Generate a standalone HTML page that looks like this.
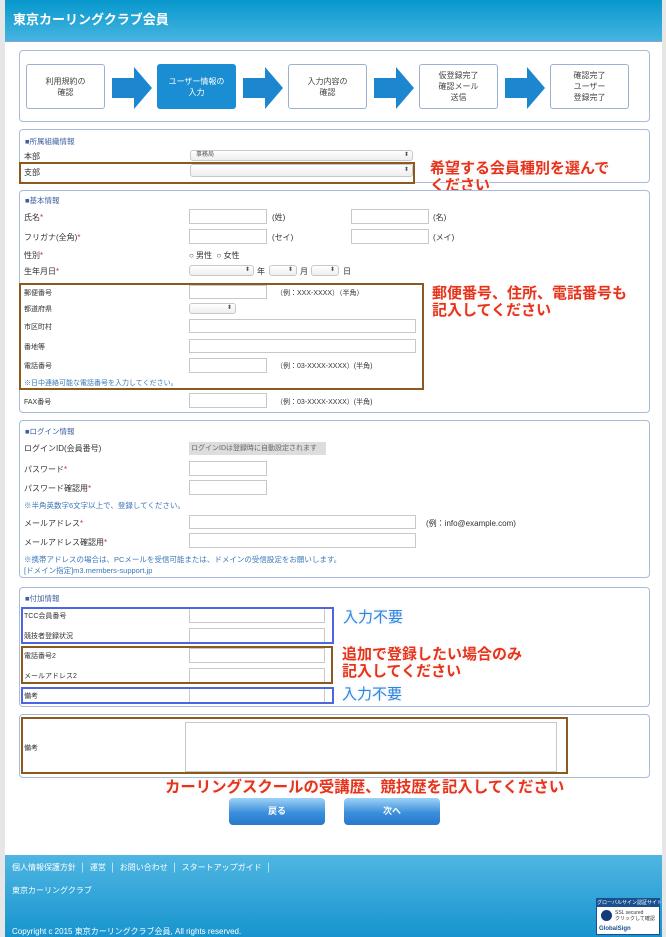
<!DOCTYPE html>
<html><head><meta charset="utf-8"><style>
*{margin:0;padding:0;box-sizing:border-box}
body{width:666px;height:937px;background:#e6e6e6;font-family:"Liberation Sans","Noto Sans CJK JP",sans-serif;font-size:8px;color:#333;position:relative;overflow:hidden}
.a{position:absolute}
#main{left:5px;top:0;width:657px;height:937px;background:#fff}
#hd{left:5px;top:0;width:657px;height:42px;background:linear-gradient(#0798cd,#46b4e0);border-bottom:1px solid #8ea0d8}
#hd span{position:absolute;left:8px;top:9px;color:#fff;font-weight:bold;font-size:13px}
.sec{border:1px solid #a8bcd9;border-radius:4px;background:#fff}
.step{border:1px solid #9bb0d2;border-radius:3px;background:#fff;text-align:center;font-size:8px;line-height:11px;display:flex;align-items:center;justify-content:center;color:#444}
.step.on{background:#1b8dd2;border-color:#1b8dd2;color:#fff}
.arr{width:40px;height:42px}
.lbl{font-size:8px;color:#333;white-space:nowrap}
.ttl{font-size:7.5px;color:#3e5fa0}
.in{border:1px solid #c8c8c8;background:#fff}
.sel{border:1px solid #c8c8c8;border-radius:3px;background:linear-gradient(#fff,#eee);font-size:6px;text-align:right;padding-right:3px;line-height:9px;color:#555}
.note{font-size:7.5px;color:#3a78b8;white-space:nowrap}
.ob{border:2px solid #8b5a1c}
.bb{border:2px solid #4d66e0}
.red{color:#e5341c;font-weight:bold;font-size:15px;line-height:17px;text-shadow:1px 1px 1px #fff,0 0 3px #fdd;white-space:nowrap}
.blu{color:#2e86e0;font-size:15px;line-height:18px;text-shadow:0 0 3px #cde;white-space:nowrap}
.btn{width:96px;height:27px;border-radius:4px;background:linear-gradient(#9ed2f6,#3a8fdc 55%,#2a78cc);color:#fff;font-weight:bold;font-size:9px;text-align:center;line-height:27px}
#ft{left:5px;top:855px;width:657px;height:82px;background:linear-gradient(#4fb6e2,#1794cf);color:#fff;font-size:8px}
</style></head><body>
<div class="a" id="main"></div>
<div class="a" id="hd"><span>東京カーリングクラブ会員</span></div>

<div class="a sec" style="left:19px;top:50px;width:631px;height:72px"></div>
<div class="a step" style="left:26px;top:64px;width:79px;height:45px">利用規約の<br>確認</div>
<div class="a step on" style="left:157px;top:64px;width:79px;height:45px">ユーザー情報の<br>入力</div>
<div class="a step" style="left:288px;top:64px;width:79px;height:45px">入力内容の<br>確認</div>
<div class="a step" style="left:419px;top:64px;width:79px;height:45px">仮登録完了<br>確認メール<br>送信</div>
<div class="a step" style="left:550px;top:64px;width:79px;height:45px">確認完了<br>ユーザー<br>登録完了</div>
<svg class="a arr" style="left:112px;top:67px" viewBox="0 0 40 42"><path d="M0 11H22V0L40 21 22 42V31H0Z" fill="#1c86cf"/></svg>
<svg class="a arr" style="left:243px;top:67px" viewBox="0 0 40 42"><path d="M0 11H22V0L40 21 22 42V31H0Z" fill="#1c86cf"/></svg>
<svg class="a arr" style="left:374px;top:67px" viewBox="0 0 40 42"><path d="M0 11H22V0L40 21 22 42V31H0Z" fill="#1c86cf"/></svg>
<svg class="a arr" style="left:505px;top:67px" viewBox="0 0 40 42"><path d="M0 11H22V0L40 21 22 42V31H0Z" fill="#1c86cf"/></svg>

<!-- sec1 -->
<div class="a sec" style="left:19px;top:129px;width:631px;height:54px"></div>
<div class="a ttl" style="left:25px;top:136px">■所属組織情報</div>
<div class="a lbl" style="left:24px;top:151px">本部</div>
<div class="a sel" style="left:190px;top:150px;width:223px;height:11px;text-align:left;padding-left:5px">事務局<span style="float:right">⬍</span></div>
<div class="a lbl" style="left:24px;top:167px">支部</div>
<div class="a sel" style="left:190px;top:164px;width:223px;height:13px;line-height:11px">⬍</div>
<div class="a ob" style="left:19px;top:162px;width:396px;height:22px"></div>
<div class="a red" style="left:430px;top:160px">希望する会員種別を選んで<br>ください</div>

<!-- sec2 -->
<div class="a sec" style="left:19px;top:190px;width:631px;height:223px"></div>
<div class="a ttl" style="left:25px;top:195px">■基本情報</div>
<div class="a lbl" style="left:24px;top:212px">氏名<span style="color:#c33">*</span></div>
<div class="a in" style="left:189px;top:209px;width:78px;height:15px"></div><div class="a lbl" style="left:272px;top:212px">(姓)</div>
<div class="a in" style="left:351px;top:209px;width:78px;height:15px"></div><div class="a lbl" style="left:433px;top:212px">(名)</div>
<div class="a lbl" style="left:24px;top:232px">フリガナ(全角)<span style="color:#c33">*</span></div>
<div class="a in" style="left:189px;top:229px;width:78px;height:15px"></div><div class="a lbl" style="left:272px;top:232px">(セイ)</div>
<div class="a in" style="left:351px;top:229px;width:78px;height:15px"></div><div class="a lbl" style="left:433px;top:232px">(メイ)</div>
<div class="a lbl" style="left:24px;top:250px">性別<span style="color:#c33">*</span></div>
<div class="a lbl" style="left:189px;top:250px">○ 男性 &nbsp;○ 女性</div>
<div class="a lbl" style="left:24px;top:266px">生年月日<span style="color:#c33">*</span></div>
<div class="a sel" style="left:189px;top:265px;width:65px;height:11px">⬍</div><div class="a lbl" style="left:257px;top:266px">年</div>
<div class="a sel" style="left:269px;top:265px;width:28px;height:11px">⬍</div><div class="a lbl" style="left:300px;top:266px">月</div>
<div class="a sel" style="left:311px;top:265px;width:28px;height:11px">⬍</div><div class="a lbl" style="left:343px;top:266px">日</div>
<div class="a ob" style="left:19px;top:283px;width:405px;height:107px"></div>
<div class="a lbl" style="left:24px;top:288px;font-size:7px">郵便番号</div>
<div class="a in" style="left:189px;top:285px;width:78px;height:14px"></div><div class="a lbl" style="left:276px;top:288px;font-size:7px">（例：XXX-XXXX）（半角）</div>
<div class="a lbl" style="left:24px;top:304px;font-size:7px">都道府県</div>
<div class="a sel" style="left:189px;top:303px;width:47px;height:11px">⬍</div>
<div class="a lbl" style="left:24px;top:322px;font-size:7px">市区町村</div>
<div class="a in" style="left:189px;top:319px;width:227px;height:14px"></div>
<div class="a lbl" style="left:24px;top:342px;font-size:7px">番地等</div>
<div class="a in" style="left:189px;top:339px;width:227px;height:14px"></div>
<div class="a lbl" style="left:24px;top:361px;font-size:7px">電話番号</div>
<div class="a in" style="left:189px;top:358px;width:78px;height:15px"></div><div class="a lbl" style="left:276px;top:361px;font-size:7px">（例：03-XXXX-XXXX）(半角)</div>
<div class="a note" style="left:24px;top:378px;font-size:7px">※日中連絡可能な電話番号を入力してください。</div>
<div class="a red" style="left:432px;top:285px">郵便番号、住所、電話番号も<br>記入してください</div>
<div class="a lbl" style="left:24px;top:397px;font-size:7px">FAX番号</div>
<div class="a in" style="left:189px;top:393px;width:78px;height:15px"></div><div class="a lbl" style="left:276px;top:397px;font-size:7px">（例：03-XXXX-XXXX）(半角)</div>

<!-- sec3 -->
<div class="a sec" style="left:19px;top:420px;width:631px;height:158px"></div>
<div class="a ttl" style="left:25px;top:426px">■ログイン情報</div>
<div class="a lbl" style="left:24px;top:443px">ログインID(会員番号)</div>
<div class="a" style="left:189px;top:442px;width:137px;height:13px;background:#ddd;font-size:7px;line-height:13px;color:#666;padding-left:2px;white-space:nowrap;overflow:hidden">ログインIDは登録時に自動設定されます</div>
<div class="a lbl" style="left:24px;top:464px">パスワード<span style="color:#c33">*</span></div>
<div class="a in" style="left:189px;top:461px;width:78px;height:15px"></div>
<div class="a lbl" style="left:24px;top:483px">パスワード確認用<span style="color:#c33">*</span></div>
<div class="a in" style="left:189px;top:480px;width:78px;height:15px"></div>
<div class="a note" style="left:24px;top:500px">※半角英数字6文字以上で、登録してください。</div>
<div class="a lbl" style="left:24px;top:518px">メールアドレス<span style="color:#c33">*</span></div>
<div class="a in" style="left:189px;top:515px;width:227px;height:14px"></div><div class="a lbl" style="left:426px;top:518px">(例：info@example.com)</div>
<div class="a lbl" style="left:24px;top:537px">メールアドレス確認用<span style="color:#c33">*</span></div>
<div class="a in" style="left:189px;top:533px;width:227px;height:15px"></div>
<div class="a note" style="left:24px;top:554px">※携帯アドレスの場合は、PCメールを受信可能または、ドメインの受信設定をお願いします。</div>
<div class="a note" style="left:24px;top:565px">[ドメイン指定]m3.members-support.jp</div>

<!-- sec4 -->
<div class="a sec" style="left:19px;top:587px;width:631px;height:120px"></div>
<div class="a ttl" style="left:25px;top:593px">■付加情報</div>
<div class="a lbl" style="left:24px;top:611px;font-size:7px">TCC会員番号</div>
<div class="a in" style="left:189px;top:608px;width:136px;height:15px"></div>
<div class="a lbl" style="left:24px;top:631px;font-size:7px">競技者登録状況</div>
<div class="a in" style="left:189px;top:628px;width:136px;height:15px"></div>
<div class="a bb" style="left:21px;top:607px;width:313px;height:37px"></div>
<div class="a lbl" style="left:24px;top:651px;font-size:7px">電話番号2</div>
<div class="a in" style="left:189px;top:648px;width:136px;height:15px"></div>
<div class="a lbl" style="left:24px;top:671px;font-size:7px">メールアドレス2</div>
<div class="a in" style="left:189px;top:668px;width:136px;height:15px"></div>
<div class="a ob" style="left:21px;top:646px;width:312px;height:38px"></div>
<div class="a lbl" style="left:24px;top:691px;font-size:7px">備考</div>
<div class="a in" style="left:189px;top:688px;width:136px;height:15px"></div>
<div class="a bb" style="left:21px;top:687px;width:313px;height:17px"></div>
<div class="a blu" style="left:343px;top:609px">入力不要</div>
<div class="a red" style="left:342px;top:646px">追加で登録したい場合のみ<br>記入してください</div>
<div class="a blu" style="left:342px;top:686px">入力不要</div>

<!-- sec5 -->
<div class="a sec" style="left:19px;top:714px;width:631px;height:64px"></div>
<div class="a in" style="left:185px;top:722px;width:372px;height:50px"></div>
<div class="a ob" style="left:21px;top:717px;width:547px;height:57px"></div>
<div class="a lbl" style="left:24px;top:743px;font-size:7px">備考</div>
<div class="a red" style="left:165px;top:779px;font-size:15.4px">カーリングスクールの受講歴、競技歴を記入してください</div>

<div class="a btn" style="left:229px;top:798px">戻る</div>
<div class="a btn" style="left:344px;top:798px">次へ</div>

<div class="a" id="ft">
<div class="a" style="left:7px;top:7px;white-space:nowrap">個人情報保護方針 &nbsp;│ &nbsp;運営 &nbsp;│ &nbsp;お問い合わせ &nbsp;│ &nbsp;スタートアップガイド &nbsp;│</div>
<div class="a" style="left:7px;top:30px">東京カーリングクラブ</div>
<div class="a" style="left:7px;top:71px;white-space:nowrap">Copyright c 2015 東京カーリングクラブ会員, All rights reserved.</div>
<div class="a" style="left:591px;top:43px;width:64px;height:37px;background:#fff;border:1px solid #1a4f8f">
<div style="background:#1a4f8f;color:#fff;font-size:5px;height:8px;line-height:8px;text-align:center;white-space:nowrap">グローバルサイン認証サイト</div>
<div style="position:absolute;left:4px;top:11px;width:11px;height:11px;border-radius:50%;background:#103a7a"></div>
<div style="position:absolute;left:18px;top:11px;font-size:5px;color:#333;white-space:nowrap;line-height:6px">SSL secured<br>クリックして確認</div>
<div style="position:absolute;left:2px;top:27px;font-size:6px;color:#1a4f8f;font-weight:bold">GlobalSign</div>
</div>
</div>
</body></html>
